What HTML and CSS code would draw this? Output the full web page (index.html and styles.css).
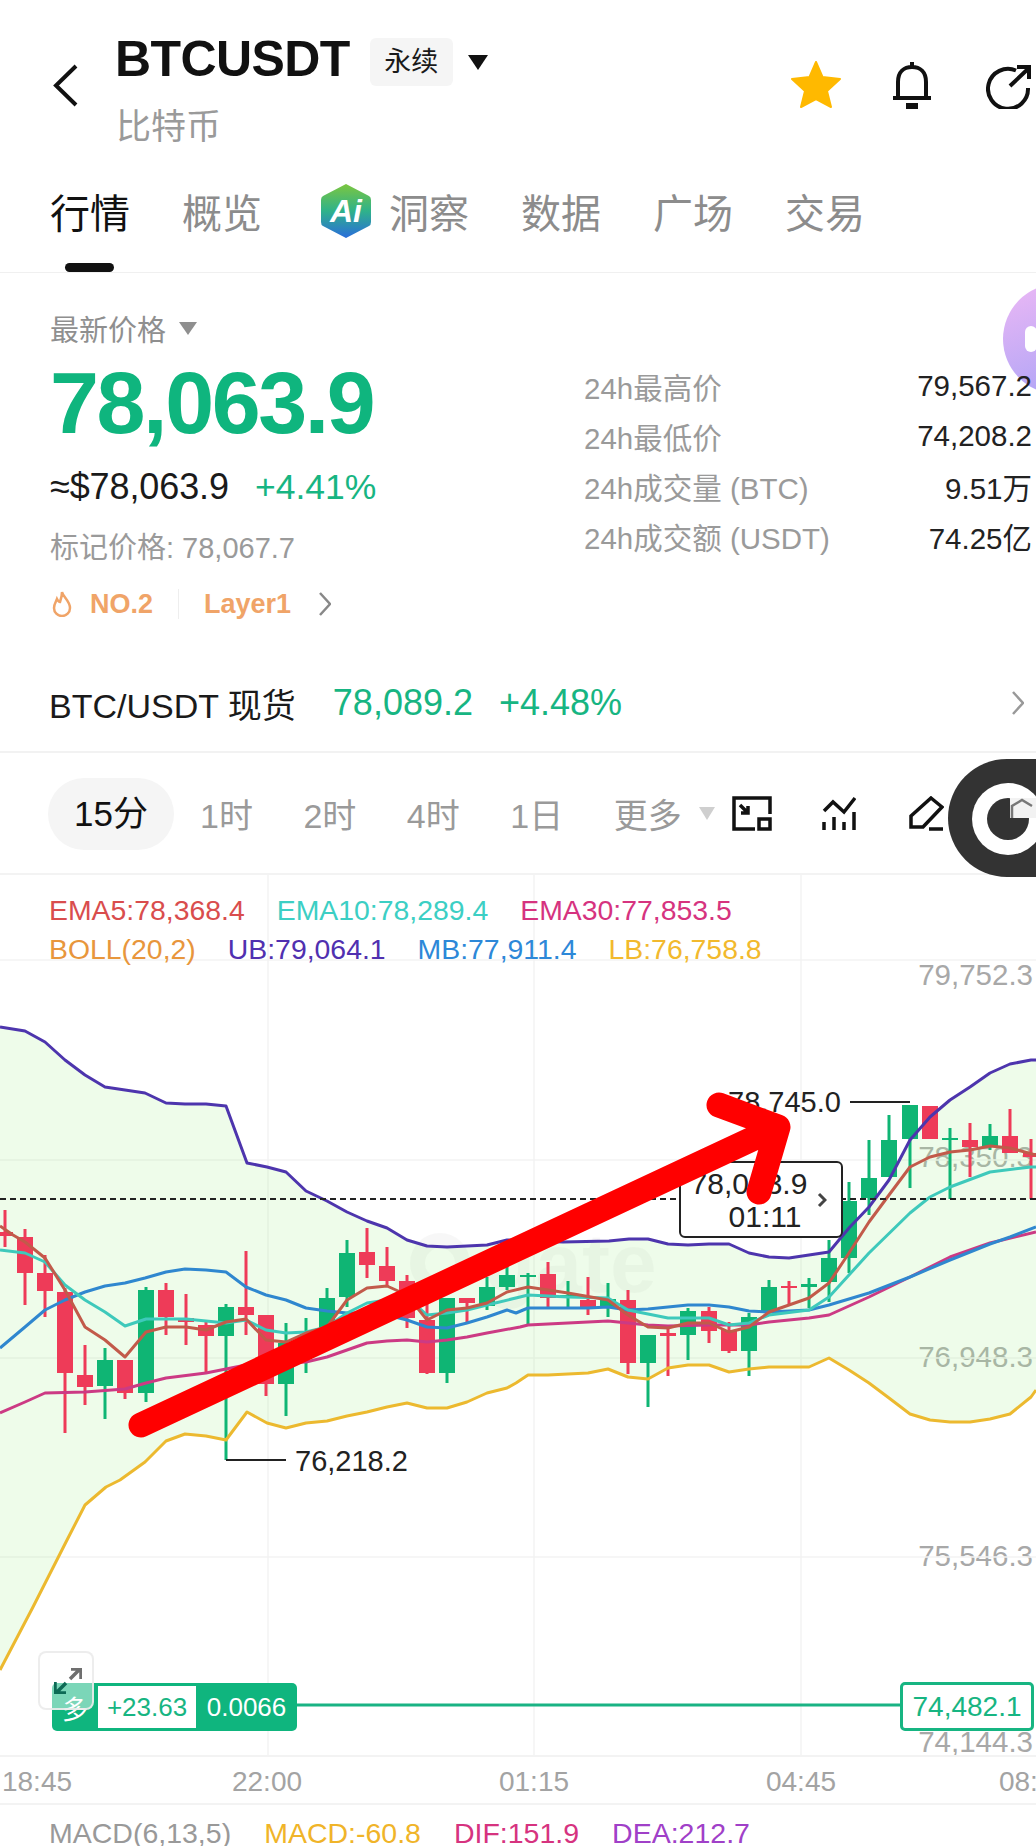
FILE: index.html
```html
<!DOCTYPE html>
<html lang="zh-CN">
<head>
    <meta charset="UTF-8">
    <title>BTCUSDT 永续</title>
    <link rel="stylesheet" href="styles.css">
</head>
<body>
<div class="page">
    <header class="top-bar">
        <svg class="back-icon" viewBox="0 0 25 43"><path d="M23 2 3 21.500 23 41"/></svg>
        <div class="title-block">
            <div class="title-row">
                <span class="symbol">BTCUSDT</span>
                <span class="contract-tag">永续</span>
                <span class="caret caret-dark"></span>
            </div>
            <div class="symbol-name">比特币</div>
        </div>
        <div class="top-actions">
            <svg class="star-icon" viewBox="0 0 50 47"><path d="M25 1 31.500 16 49 18 36 30 40 46 25 38 10 46 14 30 1 18 18.500 16z"/></svg>
            <svg class="bell-icon" viewBox="0 0 42 49"><path d="M21 1v5M7 36V21C7 11 13 6 21 6s14 5 14 15v15M2 37h38"/><path class="bell-clapper" d="M15 45h12"/></svg>
            <svg class="share-icon" viewBox="0 0 45 44"><path d="M30 5.500A20 20 0 1 0 42 23M24 21 43 3M31 2h12v12"/></svg>
        </div>
    </header>

    <nav class="tabs">
        <span class="tab tab-active">行情</span>
        <span class="tab">概览</span>
        <span class="tab tab-ai">
            <svg class="ai-logo" viewBox="0 0 50 54">
                <defs>
                    <linearGradient id="aiFill" x1="0" y1="0" x2="0" y2="1">
                        <stop offset="0" stop-color="#7cc63f"/>
                        <stop offset="0.5" stop-color="#2fb28a"/>
                        <stop offset="1" stop-color="#2a6ddb"/>
                    </linearGradient>
                </defs>
                <path d="M25 0 48 12Q50 13 50 16V38Q50 41 48 42L25 54 2 42Q0 41 0 38V16Q0 13 2 12z" fill="url(#aiFill)"/>
                <text x="25" y="38" class="ai-text">Ai</text>
            </svg>
            洞察
        </span>
        <span class="tab">数据</span>
        <span class="tab">广场</span>
        <span class="tab">交易</span>
    </nav>

    <section class="ticker">
        <div class="ticker-main">
            <div class="price-label">最新价格 <span class="caret caret-grey"></span></div>
            <div class="last-price">78,063.9</div>
            <div class="usd-row">
                <span class="usd-price">≈$78,063.9</span>
                <span class="change">+4.41%</span>
            </div>
            <div class="mark-price">标记价格: 78,067.7</div>
            <div class="tag-row">
                <svg class="flame-icon" viewBox="0 0 20 26"><path d="M10 1C11 6 18 10 18 17A8 8 0 0 1 2 17C2 13 4 11 5 8 6 10 7 11 8 11 9 8 10 5 10 1z"/></svg>
                <span class="tag-rank">NO.2</span>
                <span class="tag-divider"></span>
                <span class="tag-name">Layer1</span>
                <svg class="chevron tag-chevron" viewBox="0 0 12 24"><path d="M1 1 11 12 1 23"/></svg>
            </div>
        </div>
        <div class="ticker-stats">
            <div class="stat-row"><span class="stat-label">24h最高价</span><span class="stat-value">79,567.2</span></div>
            <div class="stat-row"><span class="stat-label">24h最低价</span><span class="stat-value">74,208.2</span></div>
            <div class="stat-row"><span class="stat-label">24h成交量 (BTC)</span><span class="stat-value">9.51万</span></div>
            <div class="stat-row"><span class="stat-label">24h成交额 (USDT)</span><span class="stat-value">74.25亿</span></div>
        </div>
        <div class="float-bubble"><span class="bubble-eye"></span></div>
    </section>

    <section class="spot-row">
        <span class="spot-name">BTC/USDT 现货</span>
        <span class="spot-price">78,089.2</span>
        <span class="spot-change">+4.48%</span>
        <svg class="chevron spot-chevron" viewBox="0 0 12 24"><path d="M1 1 11 12 1 23"/></svg>
    </section>

    <section class="toolbar">
        <span class="period period-active">15分</span>
        <span class="period">1时</span>
        <span class="period">2时</span>
        <span class="period">4时</span>
        <span class="period">1日</span>
        <span class="period period-more">更多</span>
        <span class="caret caret-light"></span>
        <svg class="tool-icon tool-layout" viewBox="0 0 40 35"><path d="M23 33H2V2H38V18M8 9l8 8M16 10v7H9"/><path d="M27 23h11v10H27z"/></svg>
        <svg class="tool-icon tool-indicator" viewBox="0 0 34 35"><path d="M2 15 11 6 22 16 33 2M2 26v8M12 21v13M22 26v8M32 16v18"/></svg>
        <svg class="tool-icon tool-draw" viewBox="0 0 35 35"><path d="M22 2 33 11 14 31H2V20zM20 33h14"/></svg>
        <svg class="float-ring" viewBox="948 759 88 118">
            <rect x="948" y="759" width="150" height="118" rx="59" fill="#333"/>
            <circle cx="1008" cy="819" r="36" fill="#fff"/>
            <circle cx="1008" cy="819" r="21" fill="#333"/>
            <rect x="1010" y="798" width="26" height="20" fill="#f2f2f2"/>
            <path d="M1012 818V806L1022 800 1032 806" fill="none" stroke="#777" stroke-width="2.500"/>
        </svg>
    </section>

    <section class="chart">
        <span class="axis-price axis-a">79,752.3</span>
        <span class="axis-price axis-b">78,350.3</span>
        <span class="axis-price axis-c">76,948.3</span>
        <span class="axis-price axis-d">75,546.3</span>
        <span class="axis-price axis-e">74,144.3</span>
        <div class="watermark"><span class="watermark-logo"></span><span>gate</span></div>

        <svg class="chart-canvas" viewBox="0 875 1036 880">
            <path class="grid" d="M268 875V1755M534 875V1755M801 875V1755M0 960H1036M0 1160H1036M0 1358H1036M0 1557H1036"/>
            <polygon class="band" points="0,1027 25,1031 45,1042 65,1060 85,1075 105,1087 125,1090 145,1093 166,1103 185,1104 206,1104 226,1106 247,1163 267,1167 286,1172 306,1191 327,1201 347,1212 367,1221 387,1228 407,1240 427,1246 447,1247 467,1246 487,1245 507,1240 563,1242 609,1241 629,1239 648,1239 668,1244 688,1245 709,1244 729,1244 749,1253 769,1257 789,1258 809,1255 829,1252 849,1228 869,1207 889,1180 910,1140 930,1117 950,1100 970,1087 990,1073 1010,1064 1031,1060 1036,1060 1036,1390 1031,1397 1010,1414 990,1419 970,1422 950,1422 930,1420 910,1414 889,1398 869,1383 849,1370 829,1358 809,1367 789,1367 769,1367 749,1369 729,1372 709,1365 688,1365 668,1368 648,1379 628,1377 608,1369 588,1373 568,1374 548,1375 528,1375 516,1383 507,1388 487,1393 467,1402 447,1408 427,1408 407,1403 387,1407 367,1412 347,1416 327,1421 306,1423 286,1428 267,1423 247,1412 226,1440 206,1436 185,1434 166,1441 145,1462 120,1480 106,1487 85,1505 66,1542 33,1607 0,1670"/>
            <path class="wick wick-up" d="M105 1348V1419M146 1287V1402M226 1304V1460M286 1323V1416M306 1318V1373M327 1288V1330M347 1240V1307M447 1298V1383M487 1277V1310M507 1267V1290M528 1273V1325M568 1281V1307M608 1283V1317M648 1335V1407M688 1308V1360M749 1313V1376M769 1280V1315M809 1278V1308M829 1240V1302M849 1182V1273M869 1140V1215M889 1115V1177M910 1105V1188M950 1128V1199M990 1124V1150"/>
            <path class="wick wick-down" d="M5 1210V1247M25 1229V1305M45 1255V1317M65 1288V1433M85 1345V1405M125 1360V1399M166 1283V1335M186 1294V1345M206 1320V1372M246 1251V1335M266 1315V1396M367 1228V1278M387 1247V1287M407 1275V1328M427 1297V1374M467 1298V1322M548 1262V1307M588 1277V1315M628 1290V1374M668 1325V1376M709 1307V1343M729 1322V1353M789 1281V1305M930 1106V1139M970 1123V1177M1010 1109V1153M1031 1139V1199"/>
            <path class="body-up" d="M97 1360h16v26h-16zM138 1290h16v103h-16zM218 1307h16v29h-16zM278 1343h16v41h-16zM298 1335h16v15h-16zM319 1298h16v30h-16zM339 1253h16v44h-16zM439 1298h16v75h-16zM479 1287h16v19h-16zM499 1275h16v12h-16zM520 1275h16v2h-16zM560 1295h16v3h-16zM600 1299h16v8h-16zM640 1335h16v28h-16zM680 1311h16v24h-16zM741 1317h16v34h-16zM761 1287h16v26h-16zM801 1284h16v3h-16zM821 1258h16v24h-16zM841 1201h16v57h-16zM861 1178h16v20h-16zM881 1140h16v37h-16zM902 1105h16v34h-16zM942 1138h16v2h-16zM982 1136h16v10h-16z"/>
            <path class="body-down" d="M-3 1232h16v4h-16zM17 1237h16v36h-16zM37 1273h16v18h-16zM57 1292h16v81h-16zM77 1375h16v12h-16zM117 1360h16v33h-16zM158 1290h16v27h-16zM178 1318h16v4h-16zM198 1325h16v11h-16zM238 1307h16v8h-16zM258 1315h16v69h-16zM359 1252h16v13h-16zM379 1266h16v15h-16zM399 1281h16v37h-16zM419 1320h16v53h-16zM459 1298h16v5h-16zM540 1274h16v24h-16zM580 1300h16v7h-16zM620 1300h16v63h-16zM660 1333h16v3h-16zM701 1311h16v20h-16zM721 1330h16v21h-16zM781 1286h16v2h-16zM922 1106h16v33h-16zM962 1140h16v7h-16zM1002 1136h16v17h-16zM1023 1153h16v4h-16z"/>
            <polyline class="line line-lb" points="0,1670 33,1607 66,1542 85,1505 106,1487 120,1480 145,1462 166,1441 185,1434 206,1436 226,1440 247,1412 267,1423 286,1428 306,1423 327,1421 347,1416 367,1412 387,1407 407,1403 427,1408 447,1408 467,1402 487,1393 507,1388 516,1383 528,1375 548,1375 568,1374 588,1373 608,1369 628,1377 648,1379 668,1368 688,1365 709,1365 729,1372 749,1369 769,1367 789,1367 809,1367 829,1358 849,1370 869,1383 889,1398 910,1414 930,1420 950,1422 970,1422 990,1419 1010,1414 1031,1397 1036,1390"/>
            <polyline class="line line-ub" points="0,1027 25,1031 45,1042 65,1060 85,1075 105,1087 125,1090 145,1093 166,1103 185,1104 206,1104 226,1106 247,1163 267,1167 286,1172 306,1191 327,1201 347,1212 367,1221 387,1228 407,1240 427,1246 447,1247 467,1246 487,1245 507,1240 563,1242 609,1241 629,1239 648,1239 668,1244 688,1245 709,1244 729,1244 749,1253 769,1257 789,1258 809,1255 829,1252 849,1228 869,1207 889,1180 910,1140 930,1117 950,1100 970,1087 990,1073 1010,1064 1031,1060 1036,1060"/>
            <polyline class="line line-ema30" points="0,1413 25,1402 45,1393 85,1392 125,1389 146,1383 166,1378 206,1373 246,1365 306,1362 327,1357 347,1350 367,1343 387,1341 407,1340 427,1342 447,1340 467,1337 487,1333 520,1327 528,1325 568,1323 608,1321 628,1323 648,1325 668,1326 709,1325 749,1325 769,1322 809,1318 829,1315 869,1297 910,1277 950,1257 990,1243 1036,1232"/>
            <polyline class="line line-mb" points="0,1348 25,1327 45,1310 65,1300 85,1292 105,1286 125,1283 145,1278 166,1272 185,1269 206,1270 226,1272 246,1287 266,1295 286,1300 306,1308 327,1311 347,1313 367,1313 387,1315 407,1320 427,1327 447,1328 467,1323 487,1317 507,1310 516,1313 528,1308 548,1308 588,1308 608,1307 628,1310 648,1309 668,1307 688,1305 709,1305 729,1307 749,1311 769,1312 809,1310 829,1305 869,1293 910,1277 950,1260 990,1244 1010,1237 1036,1227"/>
            <polyline class="line line-ema10" points="0,1250 25,1253 45,1262 65,1285 85,1300 105,1312 125,1326 146,1319 186,1319 226,1323 246,1320 266,1330 286,1333 306,1332 327,1327 347,1313 367,1303 407,1297 427,1315 447,1313 467,1310 487,1305 520,1297 528,1295 568,1297 608,1298 628,1310 668,1318 709,1318 729,1325 749,1323 769,1315 809,1310 829,1297 869,1253 910,1213 930,1197 950,1187 990,1172 1031,1167 1036,1167"/>
            <polyline class="line line-ema5" points="0,1226 13,1235 25,1242 45,1258 65,1290 85,1327 105,1340 125,1357 146,1332 166,1327 186,1327 206,1330 226,1322 246,1319 266,1340 286,1342 306,1333 327,1327 347,1300 367,1288 387,1286 407,1295 427,1320 447,1310 467,1308 487,1303 507,1292 528,1287 568,1293 608,1300 628,1315 648,1327 668,1328 688,1323 709,1323 729,1332 749,1327 769,1312 809,1298 829,1283 849,1253 869,1222 889,1195 910,1167 930,1157 950,1152 970,1150 990,1146 1010,1148 1036,1155"/>
            <path class="last-line" d="M0 1199H1036"/>
            <path class="marker-line" d="M226 1460H286M850 1102H910"/>
            <path class="order-line" d="M297 1705H900"/>
        </svg>

        <div class="legend">
            <div class="legend-row">
                <span class="c-ema5">EMA5:78,368.4</span>
                <span class="c-ema10">EMA10:78,289.4</span>
                <span class="c-ema30">EMA30:77,853.5</span>
            </div>
            <div class="legend-row">
                <span class="c-boll">BOLL(20,2)</span>
                <span class="c-ub">UB:79,064.1</span>
                <span class="c-mb">MB:77,911.4</span>
                <span class="c-lb">LB:76,758.8</span>
            </div>
        </div>

        <span class="extreme extreme-high">78,745.0</span>
        <span class="extreme extreme-low">76,218.2</span>

        <div class="last-box">
            <div class="last-box-text">
                <span>78,063.9</span>
                <span class="last-box-time">01:11</span>
            </div>
            <svg class="last-box-arrow" viewBox="0 0 10 16"><path d="M2 2 8 8 2 14"/></svg>
        </div>

        <div class="order-tag">
            <span class="order-side">多</span>
            <span class="order-pnl">+23.63</span>
            <span class="order-qty">0.0066</span>
        </div>
        <div class="order-price">74,482.1</div>

        <div class="expand-btn">
            <svg viewBox="0 0 28 26">
                <path class="expand-up" d="M16 11 25 2M17 1h10v10"/>
                <path class="expand-down" d="M12 15 3 24M1 14v11h11"/>
            </svg>
        </div>

        <svg class="arrow-mark" viewBox="0 875 1036 880">
            <path d="M141 1425 778 1127M719 1105 778 1127 759 1192"/>
        </svg>
    </section>

    <section class="time-axis">
        <span class="time-a">18:45</span>
        <span class="time-b">22:00</span>
        <span class="time-c">01:15</span>
        <span class="time-d">04:45</span>
        <span class="time-e">08:00</span>
    </section>

    <section class="macd-row">
        <span class="c-macd-name">MACD(6,13,5)</span>
        <span class="c-macd">MACD:-60.8</span>
        <span class="c-dif">DIF:151.9</span>
        <span class="c-dea">DEA:212.7</span>
    </section>
</div>
</body>
</html>
```

FILE: styles.css
```css
* {
    margin: 0;
    padding: 0;
    box-sizing: border-box;
}

body {
    font-family: "Liberation Sans", "Noto Sans CJK SC", sans-serif;
    background: #fff;
    color: #1a1a1a;
}

.page {
    position: relative;
    width: 1036px;
    height: 1846px;
    overflow: hidden;
    display: flex;
    flex-direction: column;
}

.page > * {
    flex-shrink: 0;
}

svg {
    display: block;
    flex-shrink: 0;
}

/* header */
.top-bar {
    height: 150px;
    display: flex;
    padding-left: 53px;
}

.back-icon {
    width: 25px;
    height: 43px;
    margin-top: 64px;
    fill: none;
    stroke: #111;
    stroke-width: 4;
}

.title-block {
    margin-left: 37px;
    padding-top: 38px;
}

.title-row {
    display: flex;
    align-items: center;
    height: 48px;
}

.symbol {
    font-size: 50px;
    font-weight: 700;
    letter-spacing: -0.6px;
    color: #111;
    position: relative;
    top: -3px;
}

.contract-tag {
    margin-left: 20px;
    width: 83px;
    height: 48px;
    line-height: 48px;
    text-align: center;
    font-size: 27px;
    background: #f5f5f5;
    border-radius: 6px;
}

.caret {
    display: inline-block;
    width: 0;
    height: 0;
    border-left: 10px solid transparent;
    border-right: 10px solid transparent;
    border-top: 15px solid #111;
}

.caret-dark {
    margin-left: 15px;
}

.symbol-name {
    margin-top: 19px;
    margin-left: 1px;
    font-size: 35px;
    line-height: 44px;
    color: #9a9a9a;
}

.top-actions {
    margin-left: auto;
    padding: 61px 5px 0 0;
    display: flex;
    align-items: flex-start;
}

.star-icon {
    width: 50px;
    height: 47px;
    fill: #ffb900;
    stroke: #ffb900;
    stroke-width: 2;
    stroke-linejoin: round;
}

.bell-icon {
    width: 42px;
    height: 49px;
    margin-left: 50px;
    fill: none;
    stroke: #111;
    stroke-width: 4;
}

.bell-clapper {
    stroke-width: 6;
}

.share-icon {
    width: 45px;
    height: 44px;
    margin: 4px 0 0 53px;
    fill: none;
    stroke: #111;
    stroke-width: 4;
}

/* tabs */
.tabs {
    height: 123px;
    display: flex;
    padding-left: 50px;
    gap: 52px;
    border-bottom: 1px solid #f0f0f0;
}

.tab {
    position: relative;
    display: flex;
    align-items: center;
    font-size: 40px;
    color: #8c8c8c;
}

.tab-active {
    color: #111;
}

.tab-active::after {
    content: "";
    position: absolute;
    left: 15px;
    bottom: 0;
    width: 49px;
    height: 9px;
    background: #111;
    border-radius: 5px;
}

.tab-ai {
    margin-left: 7px;
}

.ai-logo {
    width: 50px;
    height: 54px;
    margin-right: 18px;
}

.ai-text {
    font-size: 32px;
    font-weight: 700;
    font-style: italic;
    fill: #fff;
    text-anchor: middle;
}

/* ticker block */
.ticker {
    position: relative;
    height: 367px;
    display: flex;
    padding-left: 50px;
}

.ticker-main {
    width: 534px;
    padding-top: 35px;
}

.price-label {
    display: flex;
    align-items: center;
    height: 40px;
    font-size: 29px;
    color: #8f8f8f;
}

.caret-grey {
    margin-left: 13px;
    border-left-width: 9px;
    border-right-width: 9px;
    border-top: 13px solid #8f8f8f;
}

.last-price {
    margin-top: 10px;
    font-size: 88px;
    line-height: 90px;
    font-weight: 700;
    letter-spacing: -2.4px;
    color: #0fb57e;
}

.usd-row {
    margin-top: 19px;
    display: flex;
    gap: 26px;
    line-height: 40px;
}

.usd-price {
    font-size: 36px;
    letter-spacing: -0.1px;
}

.change {
    font-size: 35.500px;
    color: #17b582;
}

.mark-price {
    margin-top: 21px;
    font-size: 29px;
    line-height: 40px;
    color: #9a9a9a;
}

.tag-row {
    margin-top: 18px;
    display: flex;
    align-items: center;
    height: 36px;
    font-size: 28px;
    color: #f0a468;
}

.flame-icon {
    width: 20px;
    height: 26px;
    margin: 0 18px 0 2px;
    fill: none;
    stroke: #f0a468;
    stroke-width: 2.500;
}

.tag-rank {
    font-weight: 700;
    font-size: 27px;
}

.tag-divider {
    width: 1px;
    height: 30px;
    margin: 0 25px;
    background: #eee;
}

.tag-name {
    font-weight: 700;
    font-size: 27px;
}

.chevron {
    fill: none;
    stroke: #888;
    stroke-width: 2.500;
    width: 12px;
    height: 24px;
}

.tag-chevron {
    margin-left: 28px;
}

.ticker-stats {
    flex: 1;
    padding: 88px 4px 0 0;
    position: relative;
    z-index: 1;
}

.stat-row {
    display: flex;
    justify-content: space-between;
    align-items: center;
    height: 50px;
    font-size: 29.500px;
}

.stat-label {
    color: #9a9a9a;
}

.stat-value {
    color: #222;
}

.float-bubble {
    position: absolute;
    left: 1003px;
    top: 11px;
    width: 110px;
    height: 110px;
    border-radius: 50%;
    background: linear-gradient(160deg, #ecb8f5 0%, #a7a2f6 100%);
}

.bubble-eye {
    position: absolute;
    left: 22px;
    top: 42px;
    width: 12px;
    height: 26px;
    border-radius: 6px;
    background: #fff;
}

/* spot row */
.spot-row {
    height: 113px;
    padding: 15px 12px 0 49px;
    display: flex;
    align-items: center;
    font-size: 36px;
    border-bottom: 2px solid #f2f2f2;
}

.spot-name {
    font-size: 34px;
    color: #1a1a1a;
}

.spot-price {
    margin-left: 37px;
    color: #17b582;
}

.spot-change {
    margin-left: 26px;
    color: #17b582;
}

.spot-chevron {
    margin-left: auto;
    stroke: #999;
}

/* period toolbar */
.toolbar {
    position: relative;
    height: 122px;
    padding: 1px 0 0 48px;
    display: flex;
    align-items: center;
    border-bottom: 2px solid #f3f3f3;
}

.period {
    font-size: 34px;
    color: #9a9a9a;
    margin-right: 50.500px;
}

.period-active {
    width: 126px;
    height: 72px;
    line-height: 72px;
    text-align: center;
    border-radius: 36px;
    background: #f5f5f5;
    color: #111;
    font-size: 35px;
    margin-right: 26px;
}

.period-more {
    margin-right: 17px;
}

.caret-light {
    border-left-width: 8px;
    border-right-width: 8px;
    border-top: 13px solid #cfcfcf;
}

.tool-icon {
    fill: none;
    stroke: #111;
    stroke-width: 3.500;
    height: 35px;
}

.tool-layout {
    width: 40px;
    margin-left: 17px;
}

.tool-indicator {
    width: 34px;
    margin-left: 50px;
}

.tool-draw {
    width: 35px;
    margin-left: 53px;
}

.float-ring {
    position: absolute;
    right: 0;
    top: 6px;
    width: 88px;
    height: 118px;
}

/* chart */
.chart {
    position: relative;
    height: 880px;
}

.chart-canvas,
.arrow-mark {
    position: absolute;
    left: 0;
    top: 0;
    width: 1036px;
    height: 880px;
    fill: none;
}

.grid {
    stroke: #f3f3f3;
    stroke-width: 1.500;
}

.band {
    fill: rgba(170, 240, 150, 0.2);
}

.wick {
    stroke-width: 3;
}

.wick-up {
    stroke: #0fb574;
}

.wick-down {
    stroke: #ee3b58;
}

.body-up {
    fill: #0fb574;
}

.body-down {
    fill: #ee3b58;
}

.line {
    fill: none;
    stroke-width: 3;
    stroke-linejoin: round;
}

.line-lb { stroke: #ecb92f; }
.line-ub { stroke: #4d35ad; }
.line-ema30 { stroke: #cc3a84; }
.line-mb { stroke: #2f87cf; }
.line-ema10 { stroke: #3ec9bb; }
.line-ema5 { stroke: #c25a4a; }

.last-line {
    stroke: #222;
    stroke-width: 2;
    stroke-dasharray: 6 4;
}

.marker-line {
    stroke: #222;
    stroke-width: 2;
}

.order-line {
    stroke: #1ab384;
    stroke-width: 3;
}

.axis-price {
    position: absolute;
    right: 3px;
    font-size: 29.500px;
    line-height: 32px;
    color: #a8a8a8;
}

.axis-a { top: 84px; }
.axis-b { top: 266px; }
.axis-c { top: 466px; }
.axis-d { top: 665px; }
.axis-e { top: 851px; }

.watermark {
    position: absolute;
    left: 410px;
    top: 338px;
    display: flex;
    align-items: center;
    gap: 14px;
    font-size: 84px;
    line-height: 100px;
    font-weight: 700;
    color: rgba(0, 0, 0, 0.03);
}

.watermark-logo {
    width: 60px;
    height: 60px;
    border: 15px solid rgba(0, 0, 0, 0.03);
    border-radius: 50%;
}

.legend {
    position: absolute;
    left: 49px;
    top: 19px;
    display: flex;
    flex-direction: column;
    gap: 7px;
}

.legend-row {
    display: flex;
    gap: 32px;
    font-size: 28.400px;
    line-height: 32px;
}

.c-ema5 { color: #d94d4d; }
.c-ema10 { color: #3ccfc4; }
.c-ema30 { color: #d6337f; }
.c-boll { color: #e8963c; }
.c-ub { color: #5030b0; }
.c-mb { color: #2d88d8; }
.c-lb { color: #f2b92d; }

.extreme {
    position: absolute;
    font-size: 29px;
    line-height: 32px;
    color: #222;
}

.extreme-high {
    left: 728px;
    top: 211px;
}

.extreme-low {
    left: 295px;
    top: 570px;
}

.last-box {
    position: absolute;
    left: 679px;
    top: 286px;
    width: 164px;
    height: 77px;
    background: #fff;
    border: 2px solid #222;
    border-radius: 6px;
    display: flex;
    align-items: center;
}

.last-box-text {
    width: 136px;
    display: flex;
    flex-direction: column;
    align-items: center;
    font-size: 30px;
    line-height: 33px;
    color: #222;
}

.last-box-time {
    padding-left: 32px;
}

.last-box-arrow {
    width: 10px;
    height: 16px;
    fill: none;
    stroke: #444;
    stroke-width: 3;
}

.order-tag {
    position: absolute;
    left: 52px;
    top: 808px;
    width: 245px;
    height: 48px;
    background: #0fb57e;
    border-radius: 5px;
    display: flex;
    align-items: center;
    font-size: 26px;
    color: #fff;
}

.order-side {
    width: 46px;
    text-align: center;
}

.order-pnl {
    width: 98px;
    height: 42px;
    line-height: 42px;
    text-align: center;
    background: #fff;
    color: #17b582;
}

.order-qty {
    flex: 1;
    text-align: center;
}

.order-price {
    position: absolute;
    left: 900px;
    top: 807px;
    width: 134px;
    height: 49px;
    line-height: 43px;
    text-align: center;
    background: #fff;
    border: 3px solid #17b582;
    border-radius: 5px;
    font-size: 28px;
    color: #17b582;
}

.expand-btn {
    position: absolute;
    left: 38px;
    top: 776px;
    width: 56px;
    height: 59px;
    padding: 15px 0 0 14px;
    border: 2px solid rgba(235, 235, 235, 0.9);
    border-radius: 8px;
    background: rgba(255, 255, 255, 0.45);
}

.expand-btn svg {
    width: 28px;
    height: 26px;
    fill: none;
    stroke-width: 3.500;
}

.expand-up { stroke: #6f6f6f; }
.expand-down { stroke: #0d6a55; }

.arrow-mark path {
    stroke: #ff0000;
    stroke-width: 25;
    stroke-linecap: round;
    stroke-linejoin: round;
}

/* bottom */
.time-axis {
    position: relative;
    height: 50px;
    border-top: 2px solid #f3f3f3;
    border-bottom: 2px solid #f3f3f3;
    font-size: 28px;
    line-height: 50px;
    color: #a3a3a3;
}

.time-axis span {
    position: absolute;
    top: 0;
    width: 80px;
    text-align: center;
}

.time-a { left: -3px; }
.time-b { left: 227px; }
.time-c { left: 494px; }
.time-d { left: 761px; }
.time-e { left: 994px; }

.macd-row {
    padding: 15px 0 0 49px;
    display: flex;
    gap: 33px;
    font-size: 28.500px;
    line-height: 26px;
}

.c-macd-name { color: #999; }
.c-macd { color: #f0b429; }
.c-dif { color: #d6337f; }
.c-dea { color: #a040c8; }
```
